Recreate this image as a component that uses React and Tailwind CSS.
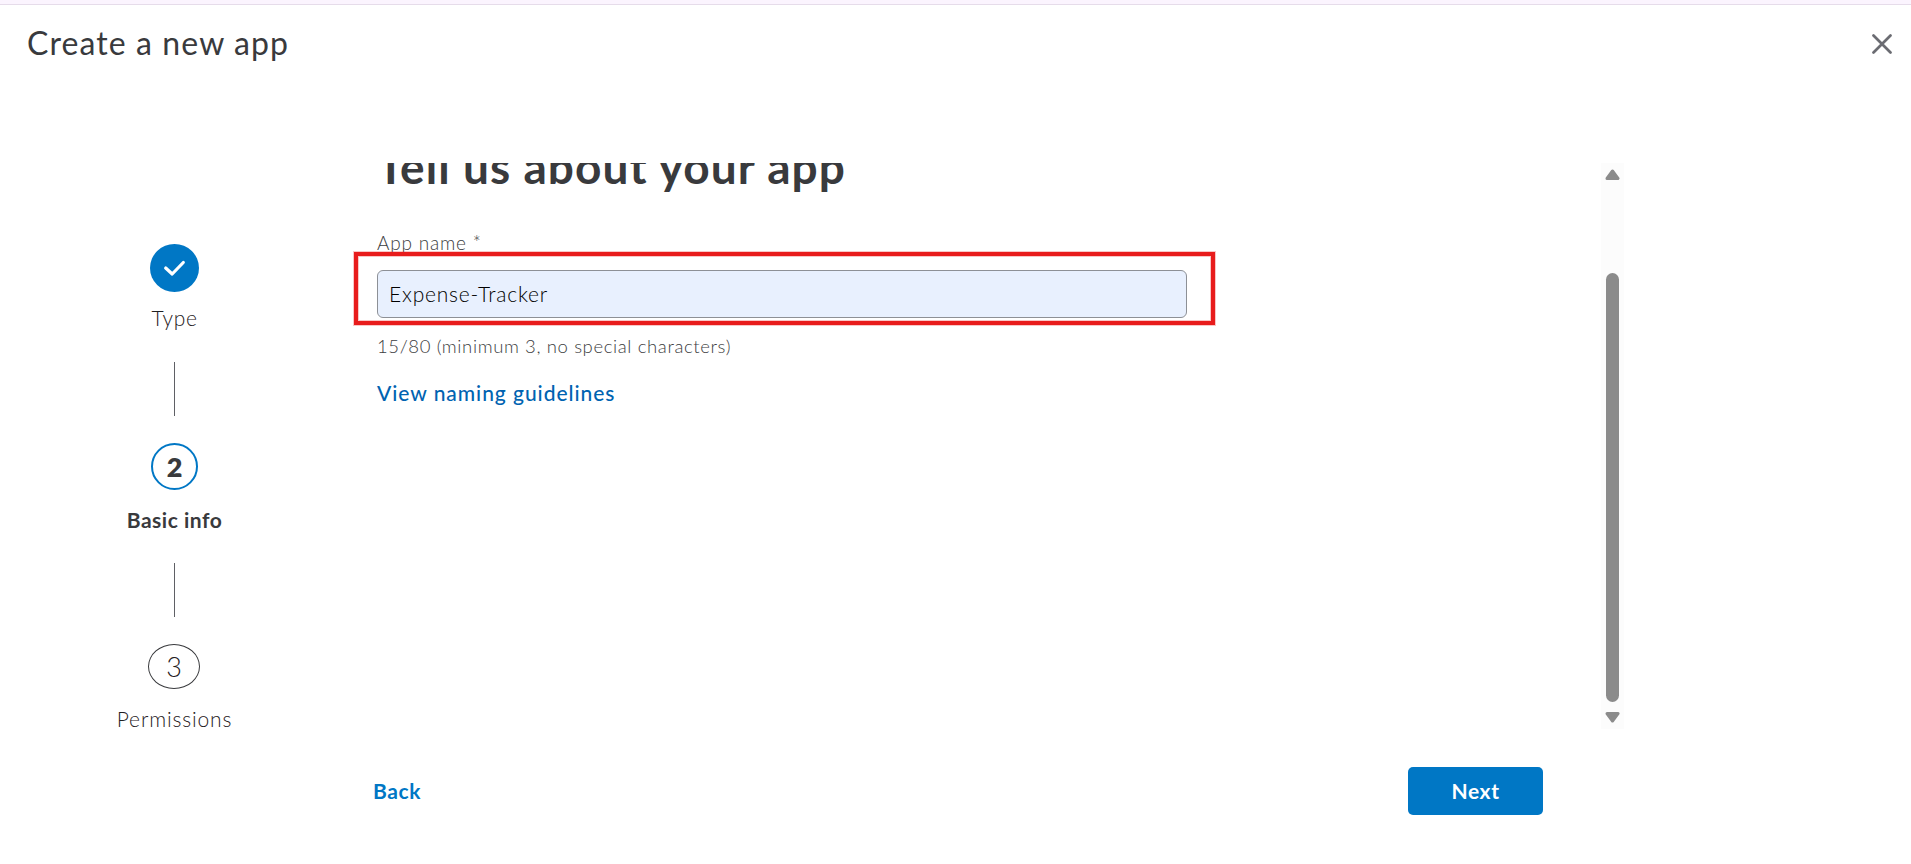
import React from "react";

function StepLine() {
  return <div className="h-[54px] w-px shrink-0 bg-[#5f6065]" />;
}

function Stepper() {
  return (
    <nav className="flex w-[349px] shrink-0 flex-col items-center pt-[81px] text-[21px] leading-[24px] text-[#393a3d]">
      <div className="flex h-12 w-[49px] shrink-0 items-center justify-center rounded-[50%] bg-[#0077c5]">
        <svg width="24" height="24" viewBox="0 0 24 24" fill="none" stroke="white" strokeWidth="3.2" strokeLinecap="round" strokeLinejoin="round">
          <path d="M2.7 12 L9.2 18 L20.3 6.5" />
        </svg>
      </div>
      <div className="mt-[14px] h-[56px] shrink-0 font-light tracking-[0.7px] text-[#1f2022]">Type</div>
      <StepLine />
      <div className="mt-[27px] flex h-[47px] w-[47px] shrink-0 items-center justify-center rounded-full border-2 border-[#0077c5] text-[27px] font-extrabold">2</div>
      <div className="mt-[18px] h-[55px] shrink-0 font-bold tracking-[0.5px]">Basic info</div>
      <StepLine />
      <div className="mt-[27px] mr-px flex h-[45px] w-[52px] shrink-0 items-center justify-center rounded-[50%] border border-[#393a3d] text-[27px] font-light text-[#1f2022]">3</div>
      <div className="mt-[18px] shrink-0 font-light tracking-[0.85px] text-[#1f2022]">Permissions</div>
    </nav>
  );
}

function Scrollbar() {
  return (
    <div className="flex h-[566px] w-[23px] flex-col items-center bg-[#fcfcfc] pt-[6px]">
      <svg className="shrink-0" width="15" height="11" viewBox="0 0 15 11" fill="#8b8b8b" stroke="#8b8b8b" strokeWidth="3" strokeLinejoin="round">
        <path d="M7.5 2 L13 9.5 H2 Z" />
      </svg>
      <div className="mt-[93px] h-[429px] w-[13px] shrink-0 rounded-full bg-[#8b8b8b]" />
      <svg className="mt-[10px] shrink-0" width="15" height="11" viewBox="0 0 15 11" fill="#8b8b8b" stroke="#8b8b8b" strokeWidth="3" strokeLinejoin="round">
        <path d="M7.5 9 L13 1.5 H2 Z" />
      </svg>
    </div>
  );
}

export default function App() {
  return (
    <div className="flex h-[864px] w-[1911px] flex-col overflow-hidden bg-white font-['Lato','Liberation_Sans',sans-serif] text-[#393a3d]">
      <div className="h-[5px] shrink-0 border-b border-[#e6dcea] bg-[#fbf4fe]" />
      <header className="flex h-[158px] shrink-0 items-start justify-between pt-[18px] pr-[19px] pl-[27px]">
        <h1 className="text-[32px] leading-[40px] tracking-[1.1px]">Create a new app</h1>
        <svg className="mt-[11px]" width="20" height="20" viewBox="0 0 20 20" fill="none" stroke="#6b6c72" strokeWidth="2.7" strokeLinecap="round">
          <path d="M1.5 1.5 L18.5 18.5 M18.5 1.5 L1.5 18.5" />
        </svg>
      </header>
      <div className="flex h-[566px] shrink-0">
        <Stepper />
        <main className="flex w-[1275px] justify-between overflow-hidden pl-[28px]">
          <div className="w-[810px]">
            <h2 className="-mt-[22px] text-[46px] leading-[52px] font-bold whitespace-nowrap tracking-[1.05px]">Tell us about your app</h2>
            <label className="mt-[38px] block text-[19px] leading-[24px] font-light tracking-[0.8px] text-[#3c3d41]">App name *</label>
            <div className="relative mt-[15px] flex h-12 items-center rounded-[6px] border border-[#8d9096] bg-[#e8f0fe] pl-[11px] text-[21px] font-light tracking-[0.8px] text-black">
              Expense-Tracker
              <div className="pointer-events-none absolute -top-[19px] -left-[24px] h-[73px] w-[861px] border-4 border-[#e81c1c] shadow-[0_0_0_1px_rgba(232,28,28,0.25),inset_0_0_0_1px_rgba(232,28,28,0.25)]" />
            </div>
            <p className="mt-[16px] text-[18.5px] leading-[24px] font-light tracking-[0.62px] text-[#3c3d41]">15/80 (minimum 3, no special characters)</p>
            <a className="mt-[22px] block text-[21px] leading-[26px] font-medium tracking-[0.95px] text-[#0063b1]">View naming guidelines</a>
          </div>
          <Scrollbar />
        </main>
      </div>
      <footer className="mt-[38px] flex h-12 w-[1543px] shrink-0 items-center justify-between pl-[373px] text-[21px] font-bold">
        <button className="tracking-[0.6px] text-[#0077c5]">Back</button>
        <button className="h-12 w-[135px] rounded-[5px] bg-[#0077c5] tracking-[0.6px] text-white">Next</button>
      </footer>
    </div>
  );
}
